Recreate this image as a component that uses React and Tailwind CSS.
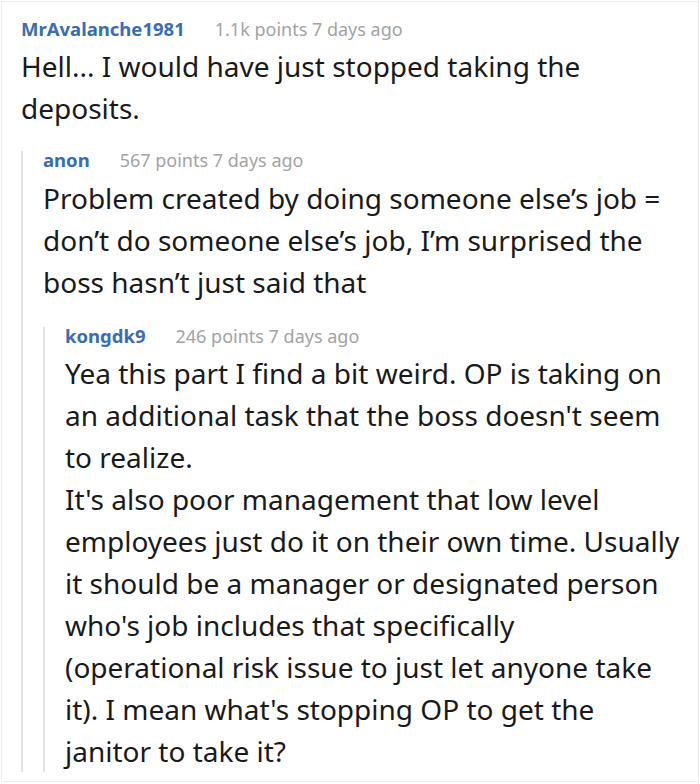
import React from "react";

const comments = [
  {
    user: "MrAvalanche1981",
    meta: "1.1k points 7 days ago",
    lines: ["Hell... I would have just stopped taking the deposits."],
  },
  {
    user: "anon",
    meta: "567 points 7 days ago",
    lines: [
      "Problem created by doing someone else’s job = don’t do someone else’s job, I’m surprised the boss hasn’t just said that",
    ],
  },
  {
    user: "kongdk9",
    meta: "246 points 7 days ago",
    lines: [
      "Yea this part I find a bit weird. OP is taking on an additional task that the boss doesn't seem to realize.",
      "It's also poor management that low level employees just do it on their own time. Usually it should be a manager or designated person who's job includes that specifically (operational risk issue to just let anyone take it). I mean what's stopping OP to get the janitor to take it?",
    ],
  },
];

// spacing above each nested reply, and between header and body
const replyGap = ["mt-[22px]", "mt-[24px]"];
const bodyGap = ["mt-[7px]", "mt-[8px]", "mt-[7px]"];

function Comment({ index }) {
  const c = comments[index];
  const last = index === comments.length - 1;
  return (
    <div>
      <div className="flex items-baseline gap-[30px] text-[18px] leading-[18px]">
        <span className="font-bold text-[18.5px] text-[#3a6db3]">{c.user}</span>
        <span className="text-[#a3a3a3]">{c.meta}</span>
      </div>
      <div
        className={
          bodyGap[index] +
          " text-[28px] leading-[42px] text-[#1a1a1a] " +
          (last ? "mb-[-11px]" : "")
        }
      >
        {c.lines.map((l, i) => (
          <p key={i}>{l}</p>
        ))}
      </div>
      {!last && (
        <div className={replyGap[index] + " border-l-2 border-[#e3e3e3] pl-[20px]"}>
          <Comment index={index + 1} />
        </div>
      )}
    </div>
  );
}

export default function App() {
  return (
    <div
      className="w-[698px] h-[781px] mt-[1px] ml-[1px] border border-[#ececec] bg-white pt-[18px] pl-[19px] pr-[18px] overflow-hidden"
      style={{ fontFamily: '"Noto Sans", "Open Sans", sans-serif' }}
    >
      <Comment index={0} />
    </div>
  );
}
